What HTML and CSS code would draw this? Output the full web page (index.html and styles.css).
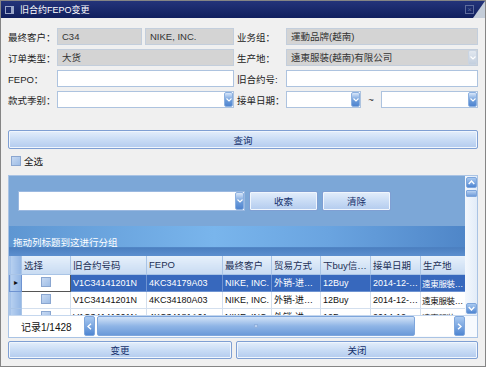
FILE: index.html
```html
<!DOCTYPE html>
<html lang="zh">
<head>
  <meta charset="UTF-8">
  <title>旧合约FEPO变更</title>
  <link rel="stylesheet" href="styles.css">
</head>
<body>
  <div class="win">
    <div class="titlebar">
      <span class="ticon"></span>
      <span class="title">旧合约FEPO变更</span>
      <span class="close">×</span>
      <span class="corner"></span>
    </div>

    <div class="content">
      <div class="form">
        <span class="lbl">最终客户：</span>
        <div class="pair">
          <div class="field ro w85">C34</div>
          <div class="field ro grow">NIKE, INC.</div>
        </div>
        <span class="lbl lbl-r">业务组：</span>
        <div class="field ro">運動品牌(越南)</div>

        <span class="lbl">订单类型：</span>
        <div class="field ro">大货</div>
        <span class="lbl lbl-r">生产地：</span>
        <div class="field ro combo">遠東服裝(越南)有限公司<span class="drop off"><svg width="6" height="4" viewBox="0 0 6 4"><polyline points="0.5,0.5 3,3 5.5,0.5" fill="none" stroke="#fff" stroke-width="1.2"/></svg></span></div>

        <span class="lbl">FEPO：</span>
        <div class="field"></div>
        <span class="lbl lbl-r">旧合约号:</span>
        <div class="field"></div>

        <span class="lbl">款式季别：</span>
        <div class="field combo"><span class="drop"><svg width="6" height="4" viewBox="0 0 6 4"><polyline points="0.5,0.5 3,3 5.5,0.5" fill="none" stroke="#fff" stroke-width="1.2"/></svg></span></div>
        <span class="lbl lbl-r">接单日期：</span>
        <div class="dates">
          <div class="field combo w75"><span class="drop"><svg width="6" height="4" viewBox="0 0 6 4"><polyline points="0.5,0.5 3,3 5.5,0.5" fill="none" stroke="#fff" stroke-width="1.2"/></svg></span></div>
          <span class="tilde">~</span>
          <div class="field combo grow"><span class="drop"><svg width="6" height="4" viewBox="0 0 6 4"><polyline points="0.5,0.5 3,3 5.5,0.5" fill="none" stroke="#fff" stroke-width="1.2"/></svg></span></div>
        </div>
      </div>

      <button class="btn query">查询</button>

      <div class="checkall"><span class="cb"></span>全选</div>

      <div class="grid">
        <div class="grid-main">
          <div class="gleft">
            <div class="searchbar">
              <div class="field combo search"><span class="drop"><svg width="6" height="4" viewBox="0 0 6 4"><polyline points="0.5,0.5 3,3 5.5,0.5" fill="none" stroke="#fff" stroke-width="1.2"/></svg></span></div>
              <button class="btn sbtn">收索</button>
              <button class="btn sbtn">清除</button>
            </div>
            <div class="groupbar">拖动列标题到这进行分组</div>
            <table class="rows">
              <colgroup>
                <col style="width:12px"><col style="width:49px"><col style="width:76px"><col style="width:76px">
                <col style="width:49px"><col style="width:49px"><col style="width:50px"><col style="width:50px"><col style="width:45px">
              </colgroup>
              <thead>
                <tr><th class="ind"></th><th>选择</th><th>旧合约号码</th><th>FEPO</th><th>最终客户</th><th>贸易方式</th><th>下buy信…</th><th>接单日期</th><th>生产地</th></tr>
              </thead>
              <tbody>
                <tr class="sel"><td class="ind">▸</td><td class="chk focus"><span class="cb"></span></td><td>V1C34141201N</td><td>4KC34179A03</td><td>NIKE, INC.</td><td>外销-进…</td><td>12Buy</td><td>2014-12-…</td><td class="tight">遠東服裝…</td></tr>
                <tr><td class="ind"></td><td class="chk"><span class="cb"></span></td><td>V1C34141201N</td><td>4KC34180A03</td><td>NIKE, INC.</td><td>外销-进…</td><td>12Buy</td><td>2014-12-…</td><td class="tight">遠東服裝…</td></tr>
                <tr><td class="ind"></td><td class="chk"><span class="cb"></span></td><td>V1C34141201N</td><td>4KC34181A01</td><td>NIKE, INC.</td><td>外销-进…</td><td>12Buy</td><td>2014-12-…</td><td class="tight">遠東服裝…</td></tr>
              </tbody>
            </table>
          </div>
          <div class="vscroll">
            <span class="sbtn-arrow"><svg width="7" height="5" viewBox="0 0 7 5"><polyline points="0.7,4 3.5,1 6.3,4" fill="none" stroke="#fff" stroke-width="1.4"/></svg></span>
            <span class="vthumb"></span>
            <span class="vtrack"></span>
            <span class="sbtn-arrow"><svg width="7" height="5" viewBox="0 0 7 5"><polyline points="0.7,1 3.5,4 6.3,1" fill="none" stroke="#fff" stroke-width="1.4"/></svg></span>
          </div>
        </div>
        <div class="gfoot">
          <span class="count">记录1/1428</span>
          <div class="hscroll">
            <span class="sbtn-arrow h"><svg width="5" height="7" viewBox="0 0 5 7"><polyline points="4,0.7 1,3.5 4,6.3" fill="none" stroke="#fff" stroke-width="1.4"/></svg></span>
            <span class="hthumb"><span class="grip"></span></span>
            <span class="htrack"></span>
            <span class="sbtn-arrow h"><svg width="5" height="7" viewBox="0 0 5 7"><polyline points="1,0.7 4,3.5 1,6.3" fill="none" stroke="#fff" stroke-width="1.4"/></svg></span>
          </div>
        </div>
      </div>

      <div class="actions">
        <button class="btn">变更</button>
        <button class="btn">关闭</button>
      </div>
    </div>
  </div>
</body>
</html>
```

FILE: styles.css
```css
* { box-sizing: border-box; }
body {
  margin: 0; background: #fff;
  font: 9.5px "Liberation Sans", "Noto Sans CJK SC", sans-serif;
  color: #222;
}
.win {
  width: 486px; height: 367px;
  background: #f0f0f0;
  border: 1px solid #858585;
}

/* title bar */
.titlebar {
  position: relative;
  height: 17px;
  background: linear-gradient(#24347a, #101f5e);
  display: flex; align-items: center;
  color: #fff; font-size: 9px;
}
.ticon {
  width: 9px; height: 8px; margin: 0 6px 0 4px;
  border: 1px solid #9aa6c8; border-right-width: 3px;
}
.close {
  position: absolute; right: 11px; top: 4px;
  width: 9px; height: 9px; line-height: 7px;
  border: 1px solid #5d6b9c; color: #5d6b9c;
  font-size: 8px; text-align: center;
}
.corner {
  position: absolute; right: 0; bottom: 0;
  width: 0; height: 0;
  border-left: 12px solid transparent;
  border-bottom: 17px solid #c4cdd9;
}

.content { padding: 10px 7px 0; }

/* form */
.form {
  display: grid;
  grid-template-columns: 49px 177px 52px 192px;
  row-gap: 4px;
  grid-auto-rows: 17px;
}
.form > .lbl { display: flex; align-items: center; white-space: nowrap; }
.form > .lbl-r { padding-left: 3px; }
.pair, .dates { display: flex; gap: 3px; align-items: center; }

.field {
  height: 17px; background: #fff;
  border: 1px solid #adc3df;
  padding: 0 4px; line-height: 15px;
  white-space: nowrap; overflow: hidden;
  position: relative;
}
.field.ro { background: #d4d4d4; border-color: #c3cedc; color: #333; }
.w85 { width: 85px; flex: none; }
.w75 { width: 75px; flex: none; }
.grow { flex: 1; }
.tilde { width: 14px; text-align: center; }
.combo .drop {
  position: absolute; right: 0; top: 0; bottom: 0;
  width: 9px;
  background: linear-gradient(#d9e7fa, #6d9ddb 55%, #4f84cf);
  border: 1px solid #8bb0e0; border-radius: 2px;
  display: flex; align-items: center; justify-content: center;
}
.combo .drop.off { background: linear-gradient(#e2e8f0, #c3cfde); border-color: #c9d4e2; }

/* buttons */
.btn {
  font: inherit; color: #15306b;
  height: 19px; padding: 0;
  background: linear-gradient(#e4eefb, #c9dcf5 50%, #b3cbee);
  border: 1px solid #7f9fd3; border-radius: 2px;
  box-shadow: inset 0 0 0 1px #f0f6fd;
}
.query { display: block; width: 470px; margin-top: 22px; }

.checkall {
  display: flex; align-items: center; gap: 3px;
  margin: 6px 0 0 3px; height: 11px;
  color: #111;
}
.cb {
  display: inline-block; width: 10px; height: 10px;
  background: linear-gradient(135deg, #c7d9f2, #9ebde6);
  border: 1px solid #8aa6d0;
}

/* grid */
.grid {
  margin-top: 9px; height: 163px;
  border: 1px solid #a9c3e4;
  background: #fff;
}
.grid-main { display: flex; height: 139px; }
.gleft { width: 456px; overflow: hidden; }
.searchbar {
  height: 50px; background: #7ca7d7;
  display: flex; align-items: flex-start; gap: 4px;
  padding: 15px 0 0 9px;
}
.search { width: 227px; height: 20px; border-color: #9ab8e0; }
.sbtn { width: 69px; height: 20px; }
.groupbar {
  height: 30px; padding: 9px 0 0 4px;
  color: #fff;
  background:
    linear-gradient(transparent 70%, #4b7fc0 72%, #5c8fcf),
    linear-gradient(90deg, #5e96d2, #79b5ec 45%, #6aa4e0 70%, #4f86c8);
}
.rows {
  border-collapse: collapse; table-layout: fixed;
  width: 456px;
}
.rows th, .rows td {
  height: 17px; padding: 0 2px;
  white-space: nowrap; overflow: hidden;
  text-align: left; font-weight: normal;
  border: 1px solid #d3dfee; border-top: none;
}
.rows th {
  height: 18px; color: #1d2f55;
  background: linear-gradient(#e6f0fb, #c8dbf2);
  border-color: #a9c4e6;
}
.rows td { font-size: 9px; color: #111; }
.rows td.tight { padding: 0 1px; font-size: 8.5px; letter-spacing: -0.3px; }
.rows .ind {
  padding: 0; text-align: center; font-size: 8px;
  background: linear-gradient(90deg, #b8d1f0, #92b5e4);
  border-color: #a9c4e6; color: #111;
}
.rows .sel td { background: #3768bd; color: #fff; border-color: #6e93d1; }
.rows .sel td.ind { background: linear-gradient(90deg, #b8d1f0, #92b5e4); color: #111; }
.rows td.chk { text-align: center; padding-top: 1px; }
.rows .sel td.focus { background: #fff; border: 1px solid #555; }

.vscroll {
  width: 12px; display: flex; flex-direction: column;
  background: linear-gradient(90deg, #f4f8fd, #e2ecf8);
  padding: 1px 0 1px 1px;
}
.sbtn-arrow {
  width: 11px; height: 11px; flex: none;
  background: linear-gradient(#a9c9f0, #4f86d2);
  border: 1px solid #7ea6dc; border-radius: 2px;
  display: flex; align-items: center; justify-content: center;
}
.vthumb {
  height: 7px; margin-top: 2px;
  background: linear-gradient(#b8d1f1, #6e9bd9);
  border: 1px solid #7ea6dc; border-radius: 1px;
}
.vtrack { flex: 1; }

.gfoot {
  display: flex; height: 22px;
  border-top: 1px solid #c5d7ee;
  background: #f7fafe;
}
.count {
  width: 75px; background: #fff;
  padding: 3px 0 0 12px; font-size: 10px; color: #111;
}
.hscroll {
  width: 381px; height: 20px;
  display: flex; align-items: stretch;
  background: #fff;
}
.sbtn-arrow.h { width: 11px; height: 20px; }
.hthumb {
  width: 318px; margin-left: 2px;
  background: linear-gradient(#d3e3f7, #8fb5e6 50%, #6b9ad9);
  border: 1px solid #7ea6dc; border-radius: 2px;
  display: flex; align-items: center; justify-content: center;
}
.grip { width: 4px; height: 4px; background: #b9cfee; border: 1px solid #8fb0de; }
.htrack { flex: 1; }

.actions {
  display: flex; gap: 4px; margin-top: 3px;
}
.actions .btn { height: 18px; width: 224px; }
.actions .btn + .btn { width: 242px; }
```
